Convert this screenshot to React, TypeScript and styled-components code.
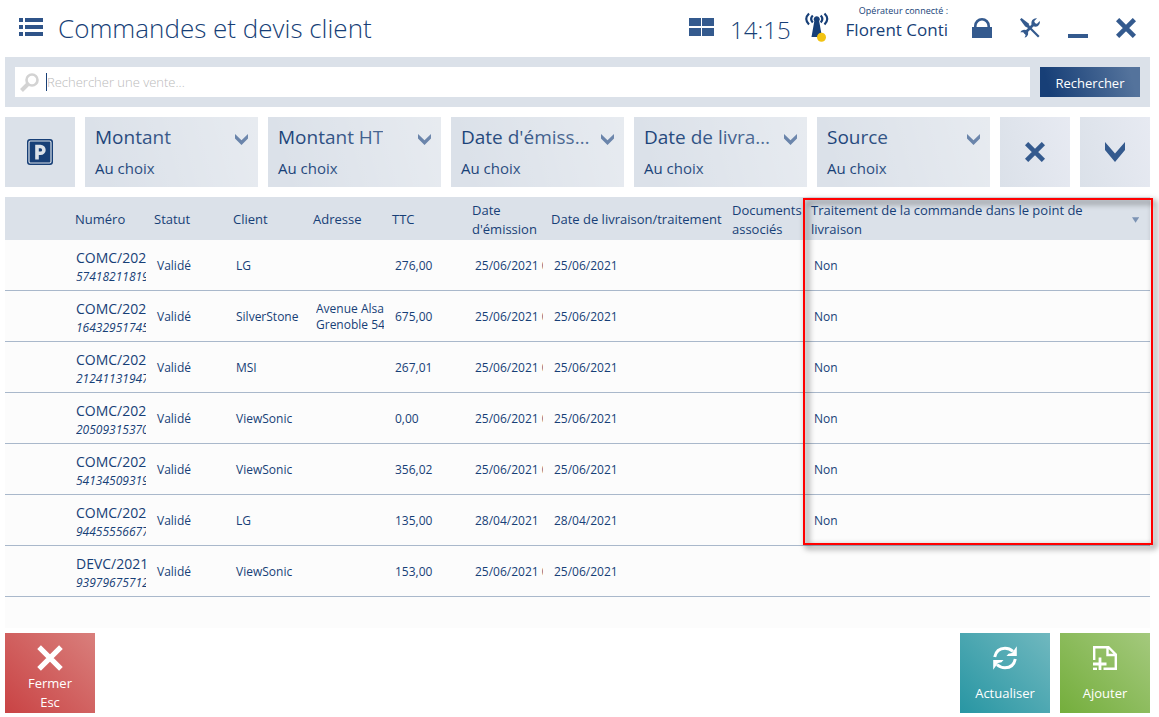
import React from "react";
import styled, { createGlobalStyle, css } from "styled-components";

const navy = "#173f77";
const panel = "#dbe1e9";
const line = "#a9b8cb";

const GlobalStyle = createGlobalStyle`
  *, *::before, *::after { box-sizing: border-box; }
  body {
    margin: 0;
    background: #fff;
    color: ${navy};
    font-family: "Open Sans", "Noto Sans", sans-serif;
    font-size: 13px;
    line-height: 19px;
  }
  button { font: inherit; color: inherit; border: 0; padding: 0; cursor: pointer; }
`;

const Page = styled.div`
  display: flex;
  flex-direction: column;
  padding: 0 9px 4px 5px;
`;

const Header = styled.header`
  display: flex;
  align-items: center;
  height: 57px;
  padding: 0 14px 3px;
`;

const Title = styled.h1`
  flex: 1;
  margin: 2px 0 0 15px;
  font-size: 26px;
  font-weight: 300;
  line-height: 40px;
  white-space: nowrap;
`;

const Clock = styled.time`
  margin: 6px 14px 0 16px;
  font-size: 24px;
  font-weight: 300;
  line-height: 40px;
`;

const Operator = styled.div`
  display: flex;
  flex-direction: column;
  align-items: flex-end;
  margin: 0 24px 8px 17px;
  white-space: nowrap;
`;

const OperatorLabel = styled.span`
  font-size: 9px;
  line-height: 14px;
`;

const OperatorName = styled.span`
  font-size: 17px;
  line-height: 24px;
`;

const WindowTools = styled.div`
  display: flex;
  gap: 28px;
  margin-top: 2px;
`;

const IconButton = styled.button`
  display: flex;
  background: none;
`;

const SearchBar = styled.form`
  display: flex;
  gap: 10px;
  padding: 10px;
  background: ${panel};
`;

const SearchField = styled.label`
  display: flex;
  flex: 1;
  align-items: center;
  gap: 7px;
  height: 30px;
  padding: 0 5px;
  background: #fff;
`;

const SearchInput = styled.input`
  flex: 1;
  min-width: 0;
  height: 18px;
  padding: 0;
  border: 0;
  border-left: 1px solid ${navy};
  outline: 0;
  font: inherit;
  color: ${navy};
  &::placeholder { color: #bbb; opacity: 1; font-weight: 300; }
`;

const SearchButton = styled.button`
  width: 100px;
  height: 30px;
  padding-top: 2px;
  color: #fff;
  background: linear-gradient(75deg, ${navy} 10%, #54739c 90%);
`;

const Filters = styled.div`
  display: flex;
  gap: 10px;
  margin: 10px 0;
`;

const tile = css`
  height: 70px;
  background: ${panel};
`;

const SquareTile = styled.button<{ $shaded?: boolean }>`
  ${tile}
  display: flex;
  flex: 0 0 70px;
  align-items: center;
  justify-content: center;
  ${(p) => p.$shaded && css`background: linear-gradient(75deg, ${panel}, #e7eaf2);`}
`;

const FilterTile = styled.button`
  ${tile}
  position: relative;
  display: flex;
  flex: 1 1 0;
  flex-direction: column;
  gap: 8px;
  min-width: 0;
  padding: 8px 10px;
  text-align: left;
  &::after {
    content: "";
    position: absolute;
    inset: 0;
    background: linear-gradient(75deg, rgba(255, 255, 255, 0) 10%, rgba(255, 255, 255, 0.34));
  }
`;

const FilterTop = styled.span`
  display: flex;
  align-items: center;
  justify-content: space-between;
  gap: 10px;
  width: 100%;
`;

const FilterName = styled.span`
  overflow: hidden;
  font-size: 19px;
  line-height: 24px;
  white-space: nowrap;
  text-overflow: ellipsis;
`;

const FilterChevron = styled.span`
  display: flex;
  padding-top: 4px;
`;

const FilterValue = styled.span`
  font-size: 15px;
  line-height: 22px;
`;

const TableArea = styled.main`
  position: relative;
  min-height: 431px;
  background: #fcfcfc;
`;

const Table = styled.table`
  width: 100%;
  table-layout: fixed;
  border-collapse: separate;
  border-spacing: 0;
`;

const HeadCell = styled.th`
  height: 43px;
  padding: 2px 0 0 3px;
  background: ${panel};
  font-weight: 400;
  text-align: left;
`;

const SortableHead = styled.span`
  display: flex;
  align-items: center;
  justify-content: space-between;
  gap: 32px;
  padding-right: 11px;
`;

const Cell = styled.td`
  height: 51px;
  padding: 1px 5px 0 6px;
  border-bottom: 1px solid ${line};
  font-size: 12px;
  line-height: 16px;
`;

const NumberCell = styled(Cell)`
  padding: 3px 5px 0 4px;
`;

const Clip = styled.div`
  overflow: hidden;
  white-space: nowrap;
`;

const Reference = styled(Clip)`
  font-size: 14px;
  line-height: 19px;
`;

const Serial = styled(Clip)`
  font-size: 12px;
  font-style: italic;
  line-height: 19px;
`;

const Highlight = styled.div`
  position: absolute;
  top: 1px;
  left: 798px;
  right: -3px;
  height: 347px;
  border: 2px solid #f00;
  filter: drop-shadow(3px 3px 3px rgba(0, 0, 0, 0.75));
  pointer-events: none;
`;

const Footer = styled.footer`
  display: flex;
  gap: 10px;
  margin-top: 5px;
`;

const ActionButton = styled.button<{ $from: string; $to: string; $push?: boolean }>`
  display: flex;
  flex-direction: column;
  align-items: center;
  width: 90px;
  height: 80px;
  padding-top: 12px;
  color: #fff;
  background: linear-gradient(45deg, ${(p) => p.$from}, ${(p) => p.$to});
  ${(p) => p.$push && css`margin-right: auto;`}
`;

const ActionLabel = styled.span<{ $lines: number }>`
  margin-top: ${(p) => (p.$lines > 1 ? 3 : 13)}px;
  white-space: pre-line;
`;

const ListIcon = () => (
  <svg width="24" height="18" viewBox="0 0 24 18" fill="#2f5489">
    {[0, 7, 14].map((y) => (
      <path key={y} d={`M0 ${y}h4v4h-4zM6 ${y}h18v4H6z`} />
    ))}
  </svg>
);

const GridIcon = () => (
  <svg width="25" height="18" viewBox="0 0 25 18" fill="#345a8e">
    <path d="M0 0h12v8H0zM13 0h12v8H13zM0 10h12v8H0zM13 10h12v8H13z" />
  </svg>
);

const AntennaIcon = () => (
  <svg width="24" height="30" viewBox="0 0 24 30" fill="none" stroke={navy} strokeWidth="2.2">
    <path d="M4 1.500Q-1.500 7 4 12.500M19.500 1.500Q25 7 19.500 12.500M7.800 3.500Q4.500 7 7.800 10.500M15.700 3.500Q19 7 15.700 10.500" />
    <path d="M11.750 4.200a3 3 0 0 1 2.400 4.900L17 25H6.500L9.350 9.100A3 3 0 0 1 11.750 4.200z" fill={navy} stroke="none" />
    <circle cx="16.500" cy="25.300" r="4.500" fill="#f2c313" stroke="none" />
  </svg>
);

const LockIcon = () => (
  <svg width="20" height="20" viewBox="0 0 20 20">
    <path d="M0 9h20v11H0z" fill="#345a8e" />
    <path d="M3.300 10V8a6.700 6.700 0 0 1 13.400 0v2" fill="none" stroke="#345a8e" strokeWidth="2.600" />
  </svg>
);

const ToolsIcon = () => (
  <svg width="20" height="20" viewBox="0 0 20 20" fill="#345a8e">
    <path d="M0 1.500L1.500 0 8.300 5.300 10.300 9.200 9 10.500 5.200 8.500z" />
    <path d="M9 9L18.800 18.800" stroke="#345a8e" strokeWidth="2.200" />
    <path d="M4.500 15.500L15 5" stroke="#345a8e" strokeWidth="2.600" />
    <path d="M17 .200L14.300 3 14.600 5.400 17 5.700 19.800 3Q20.300 6.300 18 8 15.500 9.300 13 8L11.700 6.700Q10.800 4.500 12.300 2.100 14.300-.200 17 .200z" />
    <path d="M.300 14.300Q1.300 11.800 4 11.700 6.200 11.700 7.500 12.800 8.600 14.500 8 16.800 7 19.300 4.600 19.700L5.700 16.900 3.300 14.200z" />
  </svg>
);

const MinimizeIcon = () => (
  <svg width="20" height="20" viewBox="0 0 20 20" fill="#345a8e">
    <path d="M0 16h20v4H0z" />
  </svg>
);

const CrossIcon = ({ size = 20, color = "#345a8e", weight = 4.6 }) => (
  <svg width={size} height={size} viewBox="0 0 20 20" stroke={color} strokeWidth={weight}>
    <path d="M1.600 1.600L18.400 18.400M18.400 1.600L1.600 18.400" />
  </svg>
);

const SearchIcon = () => (
  <svg width="19" height="19" viewBox="0 0 19 19" fill="none" stroke="#d3d3d3">
    <circle cx="12" cy="7" r="5.500" strokeWidth="2.600" />
    <path d="M8 11L1.500 17.500" strokeWidth="4" />
  </svg>
);

const ParkingIcon = () => (
  <svg width="26" height="26" viewBox="0 0 26 26">
    <rect width="26" height="26" rx="3" fill={navy} />
    <rect x="2" y="2" width="22" height="22" rx="1.500" fill="none" stroke={panel} strokeWidth="1.200" />
    <path d="M10 20.500V7.500h3.500a3.400 3.400 0 0 1 0 6.800H10" fill="none" stroke={panel} strokeWidth="3.600" />
  </svg>
);

const ChevronIcon = ({ width = 13, height = 11, color = "#2d5288" }) => (
  <svg width={width} height={height} viewBox="0 0 20 20" preserveAspectRatio="none" fill={color}>
    <path d="M0 0L10 11.500 20 0V8L10 20 0 8z" />
  </svg>
);

const SortIcon = () => (
  <svg width="8" height="6" viewBox="0 0 8 6" fill="#7c93b4">
    <path d="M0 0h8L4 6z" />
  </svg>
);

const RefreshIcon = () => (
  <svg width="26" height="26" viewBox="0 0 26 26" fill="#fff">
    {[0, 180].map((turn) => (
      <g key={turn} transform={`rotate(${turn} 13 13)`}>
        <path d="M2.700 12Q4.500 3.200 13 3.200 17.500 3.200 21 6.300" fill="none" stroke="#fff" strokeWidth="3" />
        <path d="M24.800 1.200V11H14.500L16.500 8.700 20 8z" />
      </g>
    ))}
  </svg>
);

const AddFileIcon = () => (
  <svg width="26" height="26" viewBox="0 0 26 26" fill="none" stroke="#fff" strokeWidth="2.400">
    <path d="M2.200 15V2.200H16.500L23.800 9.500V23.800H11.500M15.500 2.500V10H23.500" />
    <path d="M1 19H14.500M8 12.500V25" strokeWidth="2.800" />
    <path d="M1 23.800H5" />
  </svg>
);

const filters = ["Montant", "Montant HT", "Date d'émission", "Date de livraison", "Source"];

const columnWidths = [67, 79, 79, 80, 79, 80, 79, 181, 79];

const headings = [
  "",
  "Numéro",
  "Statut",
  "Client",
  "Adresse",
  "TTC",
  "Date d'émission",
  "Date de livraison/traitement",
  "Documents associés",
];

type Order = {
  ref: string;
  serial: string;
  client: string;
  address?: string[];
  total: string;
  issued: string;
  delivery: string;
  inStore?: string;
};

const orders: Order[] = [
  { ref: "COMC/2021", serial: "574182118190", client: "LG", total: "276,00", issued: "25/06/2021 0", delivery: "25/06/2021", inStore: "Non" },
  { ref: "COMC/2021", serial: "164329517450", client: "SilverStone", address: ["Avenue Alsace", "Grenoble 54"], total: "675,00", issued: "25/06/2021 0", delivery: "25/06/2021", inStore: "Non" },
  { ref: "COMC/2021", serial: "212411319470", client: "MSI", total: "267,01", issued: "25/06/2021 0", delivery: "25/06/2021", inStore: "Non" },
  { ref: "COMC/2021", serial: "205093153700", client: "ViewSonic", total: "0,00", issued: "25/06/2021 0", delivery: "25/06/2021", inStore: "Non" },
  { ref: "COMC/2021", serial: "541345093190", client: "ViewSonic", total: "356,02", issued: "25/06/2021 0", delivery: "25/06/2021", inStore: "Non" },
  { ref: "COMC/2021", serial: "944555566770", client: "LG", total: "135,00", issued: "28/04/2021", delivery: "28/04/2021", inStore: "Non" },
  { ref: "DEVC/2021", serial: "939796757120", client: "ViewSonic", total: "153,00", issued: "25/06/2021 0", delivery: "25/06/2021" },
];

export default function App() {
  return (
    <Page>
      <GlobalStyle />
      <Header>
        <IconButton aria-label="Menu"><ListIcon /></IconButton>
        <Title>Commandes et devis client</Title>
        <IconButton aria-label="Modules"><GridIcon /></IconButton>
        <Clock>14:15</Clock>
        <AntennaIcon />
        <Operator>
          <OperatorLabel>Opérateur connecté :</OperatorLabel>
          <OperatorName>Florent Conti</OperatorName>
        </Operator>
        <WindowTools>
          <IconButton aria-label="Verrouiller"><LockIcon /></IconButton>
          <IconButton aria-label="Outils"><ToolsIcon /></IconButton>
          <IconButton aria-label="Réduire"><MinimizeIcon /></IconButton>
          <IconButton aria-label="Quitter"><CrossIcon /></IconButton>
        </WindowTools>
      </Header>

      <SearchBar onSubmit={(e) => e.preventDefault()}>
        <SearchField>
          <SearchIcon />
          <SearchInput type="text" aria-label="Rechercher une vente" placeholder="Rechercher une vente..." />
        </SearchField>
        <SearchButton type="submit">Rechercher</SearchButton>
      </SearchBar>

      <Filters>
        <SquareTile aria-label="En attente"><ParkingIcon /></SquareTile>
        {filters.map((name) => (
          <FilterTile key={name} aria-haspopup="listbox">
            <FilterTop>
              <FilterName>{name}</FilterName>
              <FilterChevron><ChevronIcon /></FilterChevron>
            </FilterTop>
            <FilterValue>Au choix</FilterValue>
          </FilterTile>
        ))}
        <SquareTile $shaded aria-label="Effacer les filtres"><CrossIcon /></SquareTile>
        <SquareTile $shaded aria-label="Plus de filtres"><ChevronIcon width={20} height={20} color="#345a8e" /></SquareTile>
      </Filters>

      <TableArea>
        <Table>
          <colgroup>
            {columnWidths.map((width, i) => <col key={i} width={width} />)}
            <col />
          </colgroup>
          <thead>
            <tr>
              {headings.map((text, i) => <HeadCell key={i} scope="col">{text}</HeadCell>)}
              <HeadCell scope="col">
                <SortableHead>
                  Traitement de la commande dans le point de livraison
                  <SortIcon />
                </SortableHead>
              </HeadCell>
            </tr>
          </thead>
          <tbody>
            {orders.map((o) => (
              <tr key={o.serial}>
                <Cell />
                <NumberCell>
                  <Reference>{o.ref}</Reference>
                  <Serial>{o.serial}</Serial>
                </NumberCell>
                <Cell>Validé</Cell>
                <Cell>{o.client}</Cell>
                <Cell>{o.address?.map((part) => <Clip key={part}>{part}</Clip>)}</Cell>
                <Cell>{o.total}</Cell>
                <Cell><Clip>{o.issued}</Clip></Cell>
                <Cell>{o.delivery}</Cell>
                <Cell />
                <Cell>{o.inStore}</Cell>
              </tr>
            ))}
          </tbody>
        </Table>
        <Highlight />
      </TableArea>

      <Footer>
        <ActionButton $from="#c94344" $to="#d97f7c" $push>
          <CrossIcon size={26} color="#fff" weight={4} />
          <ActionLabel $lines={2}>{"Fermer\nEsc"}</ActionLabel>
        </ActionButton>
        <ActionButton $from="#2896a3" $to="#70b8bf">
          <RefreshIcon />
          <ActionLabel $lines={1}>Actualiser</ActionLabel>
        </ActionButton>
        <ActionButton $from="#74ae3c" $to="#a4c97d">
          <AddFileIcon />
          <ActionLabel $lines={1}>Ajouter</ActionLabel>
        </ActionButton>
      </Footer>
    </Page>
  );
}
